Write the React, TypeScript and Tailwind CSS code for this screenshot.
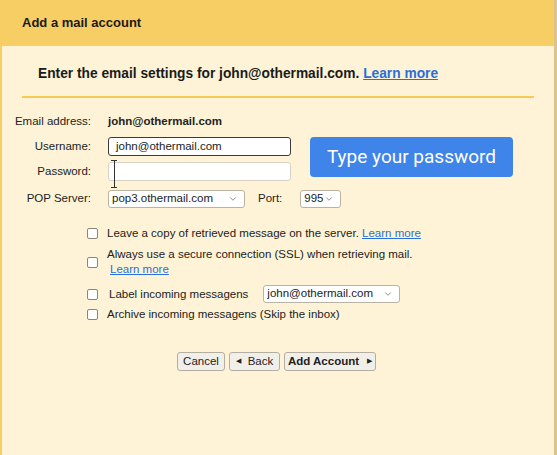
import { ChevronDown } from "lucide-react";

const font = { fontFamily: '"Liberation Sans", Arial, sans-serif' };

function Select({ value, className }: { value: string; className: string }) {
  return (
    <div
      className={`flex items-center justify-between rounded-[3px] border border-[#b9b3a3] bg-white pl-[3px] pr-[6px] text-[11.5px] text-[#222] ${className}`}
    >
      <span>{value}</span>
      <ChevronDown size={10} strokeWidth={2} className="text-[#777]" />
    </div>
  );
}

function Check({ children, className = "" }: { children: React.ReactNode; className?: string }) {
  return (
    <div className={`flex items-center ${className}`}>
      <div className="h-[11px] w-[11px] shrink-0 rounded-[2px] border border-[#8a8678] bg-white" />
      <div className="ml-[9px] text-[11.5px] leading-[15px] text-[#222]">{children}</div>
    </div>
  );
}

export default function App() {
  return (
    <div
      className="flex h-[455px] w-[557px] flex-col overflow-hidden border-l-2 border-r-[3px] border-l-[#f7ce63] border-r-[#d9c58c] bg-[#fef3d6]"
      style={font}
    >
      <div className="flex h-[46px] shrink-0 items-center bg-[#f7ce63] pl-[20px] text-[13px] font-bold text-[#1a1a1a]">
        Add a mail account
      </div>

      <div className="mt-[19px] pl-[36px] text-[13.75px] font-bold leading-[18px] text-[#1a1a1a]">
        Enter the email settings for john@othermail.com.{" "}
        <span className="text-[#2a6fd8] underline">Learn more</span>
      </div>

      <div className="mx-[20px] mt-[13px] h-[2px] bg-[#f7c955]" />

      <div className="mt-[16px] flex flex-col text-[11.5px] text-[#222]">
        <div className="flex h-[16px] items-center">
          <div className="w-[89px] text-right">Email address:</div>
          <div className="ml-[17px] font-bold">john@othermail.com</div>
        </div>

        <div className="mt-[7px] flex items-start">
          <div className="flex flex-col">
            <div className="flex items-center">
              <div className="w-[89px] text-right">Username:</div>
              <div className="ml-[17px] flex h-[19px] w-[183px] items-center rounded-[3px] border border-[#3a3a3a] bg-white pl-[7px]">
                john@othermail.com
              </div>
            </div>
            <div className="mt-[6px] flex items-center">
              <div className="w-[89px] text-right">Password:</div>
              <div className="relative ml-[17px] h-[19px] w-[183px] rounded-[3px] border border-[#d6d1c4] bg-white">
                <div className="absolute left-[2px] top-[-3px] flex h-[28px] w-[6px] flex-col items-center justify-between">
                  <div className="h-px w-[6px] bg-[#333]" />
                  <div className="w-px flex-1 bg-[#333]" />
                  <div className="h-px w-[6px] bg-[#333]" />
                </div>
              </div>
            </div>
          </div>
          <div
            className="ml-[19px] flex h-[40px] w-[203px] items-center justify-center rounded-[4px] bg-[#3f84e9] text-[19px] text-white"
            style={{ fontFamily: "Roboto, sans-serif" }}
          >
            Type your password
          </div>
        </div>

        <div className="mt-[9px] flex items-center">
          <div className="w-[89px] text-right">POP Server:</div>
          <Select value="pop3.othermail.com" className="ml-[17px] h-[18px] w-[137px]" />
          <div className="ml-[13px]">Port:</div>
          <Select value="995" className="ml-[18px] h-[18px] w-[41px]" />
        </div>
      </div>

      <div className="ml-[85px] mt-[18px] flex flex-col">
        <Check className="h-[15px]">
          Leave a copy of retrieved message on the server.{" "}
          <span className="text-[#2a6fd8] underline">Learn more</span>
        </Check>
        <Check className="mt-[6px]">
          <div>Always use a secure connection (SSL) when retrieving mail.</div>
          <div className="pl-[3px] text-[#2a6fd8] underline">Learn more</div>
        </Check>
        <div className="mt-[8px] flex h-[18px] items-center">
          <Check>
            <span className="pl-[2px]">Label incoming messagens</span>
          </Check>
          <Select value="john@othermail.com" className="ml-[15px] h-[18px] w-[137px]" />
        </div>
        <Check className="mt-[4px] h-[15px]">Archive incoming messagens (Skip the inbox)</Check>
      </div>

      <div className="mt-[30px] flex justify-center gap-[4px] pr-[3px] text-[11.5px] text-[#222]">
        <div className="flex h-[19px] w-[48px] items-center justify-center rounded-[3px] border border-[#b3ae9f] bg-[#f1efea]">
          Cancel
        </div>
        <div className="flex h-[19px] w-[51px] items-center justify-center gap-[7px] rounded-[3px] border border-[#b3ae9f] bg-[#f1efea]">
          <span className="text-[7px]">◀</span>Back
        </div>
        <div className="flex h-[19px] w-[92px] items-center justify-center gap-[8px] rounded-[3px] border border-[#b3ae9f] bg-[#f1efea] font-bold">
          Add Account<span className="text-[7px] font-normal">▶</span>
        </div>
      </div>
    </div>
  );
}
